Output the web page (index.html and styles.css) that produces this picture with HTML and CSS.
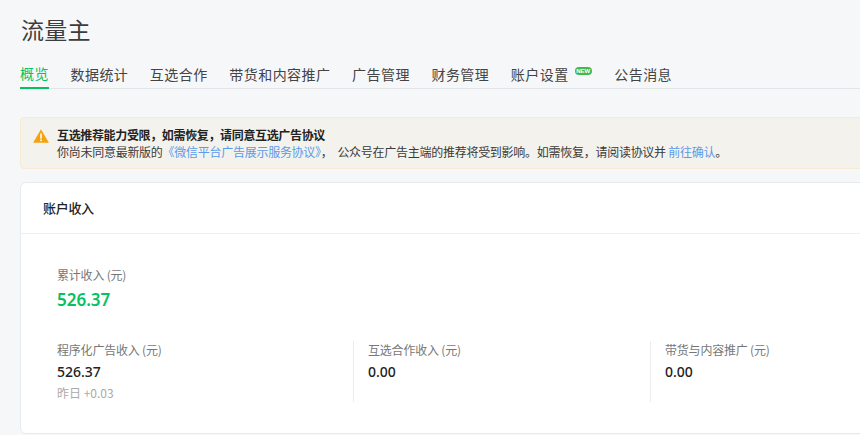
FILE: index.html
```html
<!DOCTYPE html>
<html lang="zh-CN">
<head>
<meta charset="utf-8">
<title>流量主</title>
<link rel="stylesheet" href="styles.css">
</head>
<body>
<div class="page">
  <h1 class="title">流量主</h1>
  <nav class="tabs">
    <a class="tab active">概览</a>
    <a class="tab">数据统计</a>
    <a class="tab">互选合作</a>
    <a class="tab">带货和内容推广</a>
    <a class="tab">广告管理</a>
    <a class="tab">财务管理</a>
    <a class="tab">账户设置<span class="badge">NEW</span></a>
    <a class="tab">公告消息</a>
  </nav>
  <div class="alert">
    <svg class="alert-icon" width="16" height="14" viewBox="0 0 16 14"><path d="M8 0.3 15.9 13.7H0.1Z" fill="#f5a30d"/><rect x="7.2" y="4.6" width="1.6" height="5" fill="#fff"/><rect x="7.2" y="10.5" width="1.6" height="1.6" fill="#fff"/></svg>
    <div class="alert-body">
      <div class="alert-title">互选推荐能力受限，如需恢复，请同意互选广告协议</div>
      <div class="alert-text">你尚未同意最新版的<a class="link">《微信平台广告展示服务协议》</a>，&nbsp;&nbsp;公众号在广告主端的推荐将受到影响。如需恢复，请阅读协议并 <a class="link">前往确认</a>。</div>
    </div>
  </div>
  <section class="card">
    <h2 class="card-head">账户收入</h2>
    <div class="card-body">
      <div class="total">
        <div class="label">累计收入 (元)</div>
        <div class="total-value">526.37</div>
      </div>
      <div class="stats">
        <div class="stat">
          <div class="label">程序化广告收入 (元)</div>
          <div class="value">526.37</div>
          <div class="delta">昨日 +0.03</div>
        </div>
        <div class="stat">
          <div class="label">互选合作收入 (元)</div>
          <div class="value">0.00</div>
        </div>
        <div class="stat">
          <div class="label">带货与内容推广 (元)</div>
          <div class="value">0.00</div>
        </div>
      </div>
    </div>
  </section>
</div>
</body>
</html>
```
FILE: styles.css
```css
* { box-sizing: border-box; }
html, body { margin: 0; height: 100%; overflow: hidden; background: #f6f7f9; }
body { font-family: "Noto Sans CJK SC", "Noto Sans", sans-serif; color: #353535; }
.page { width: 1000px; padding: 13px 0 0 20px; }
.title { margin: 0 0 0 1px; font-size: 23px; line-height: 32px; letter-spacing: .3px; font-weight: 400; color: #3c3c3c; }
.tabs { display: flex; gap: 21.5px; height: 44px; border-bottom: 1px solid #e3e4e7; align-items: stretch; }
.tab { display: flex; align-items: center; height: 44px; padding-top: 14px; font-size: 14px; letter-spacing: .47px; color: #444; }
.tab.active { color: #07c160; border-bottom: 2px solid #07c160; }
.badge { width: 17px; height: 8px; margin: -6px 1px 0 6px; border-radius: 4px; background: #3fb950; color: #fff; font: 700 6px/8px "Liberation Sans", sans-serif; letter-spacing: 0; text-align: center; }
.alert { display: flex; gap: 8px; margin-top: 28px; height: 52px; padding: 8px 12px; background: #f4f2ed; border: 1px solid #f8e9d2; border-radius: 4px; }
.alert-icon { margin-top: 3px; flex: none; }
.alert-title { font-size: 12px; line-height: 17px; letter-spacing: -.35px; font-weight: 700; color: #222; }
.alert-text { font-size: 12px; line-height: 18px; letter-spacing: -.27px; color: #3a3a3a; }
.link { color: #5a9bea; }
.card { margin-top: 13px; background: #fff; border: 1px solid #e9eaec; border-radius: 6px; height: 252px; }
.card-head { margin: 0; height: 51px; padding-left: 22px; font-size: 13px; line-height: 50px; letter-spacing: -.3px; font-weight: 500; color: #222; border-bottom: 1px solid #efefef; }
.card-body { padding: 32px 0 0 36px; }
.label { font-size: 12px; line-height: 18px; letter-spacing: -.2px; color: #777; }
.total-value { margin-top: 4px; font: 600 17px/24px "Noto Sans", sans-serif; color: #07c160; }
.stats { display: flex; margin-top: 29px; }
.stat { width: 297px; height: 61px; padding-left: 14px; border-left: 1px solid #ececec; }
.stat:first-child { width: 296px; padding-left: 0; border-left: 0; }
.value { margin-top: 3px; font: 500 14px/20px "Noto Sans", sans-serif; color: #222; }
.delta { margin-top: 2px; font-size: 12px; line-height: 18px; color: #aaa; }
```
